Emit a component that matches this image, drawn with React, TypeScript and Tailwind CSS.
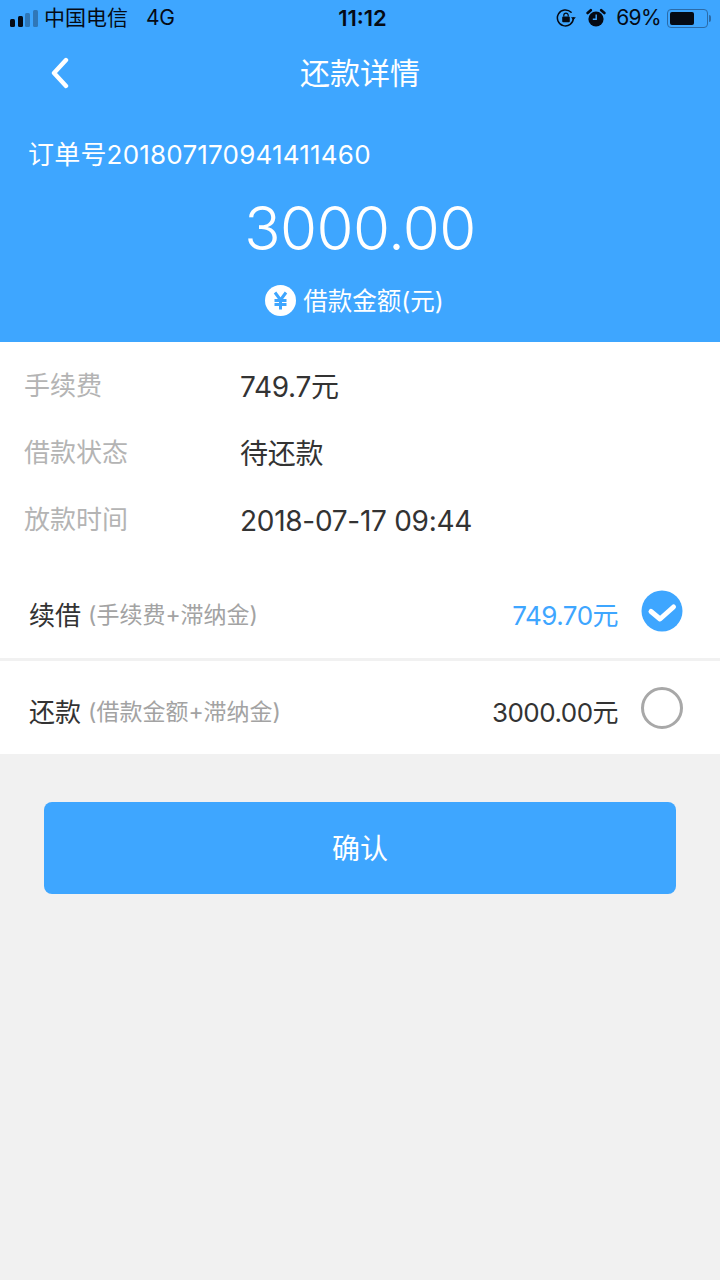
const page = "font-['Inter','Noto_Sans_CJK_SC',sans-serif]"

function StatusBar() {
   return (
      <div className="h-9 flex items-center justify-between pl-[10px] pr-[9px] text-[#050a14] text-[21px] relative">
         <div className="flex items-center">
            <div className="flex items-end gap-[2.5px] h-[18px] w-[29px] -mt-px">
               <span className="w-[5px] h-[8px] rounded-[1.5px] bg-[#050a14]" />
               <span className="w-[5px] h-[11px] rounded-[1.5px] bg-[#050a14]" />
               <span className="w-[5px] h-[14px] rounded-[1.5px] bg-[#2f77b8]" />
               <span className="w-[5px] h-[17px] rounded-[1.5px] bg-[#2f77b8]" />
            </div>
            <span className="ml-[5px]">中国电信</span>
            <span className="ml-[18px] tracking-[-0.02em]">4G</span>
         </div>
         <span className="absolute left-0 right-0 text-center font-semibold text-[22px] pl-[5px]">11:12</span>
         <div className="flex items-center">
            <svg width="20" height="20" viewBox="0 0 20 20" fill="none" className="mr-[10px]">
               <path d="M17.4 10a8 8 0 1 1-2.3-5.7" stroke="#050a14" strokeWidth="1.5" strokeLinecap="round" />
               <path d="M19.8 9.2h-4.8l2.4 3z" fill="#050a14" />
               <rect x="6.2" y="8.6" width="7.6" height="5.6" rx="1" fill="#050a14" />
               <path d="M7.8 8.6V7.3a2.2 2.2 0 0 1 4.4 0v1.3" stroke="#050a14" strokeWidth="1.2" />
            </svg>
            <svg width="20" height="20" viewBox="0 0 20 20" className="mr-[10px]">
               <circle cx="10" cy="11" r="7.6" fill="#050a14" />
               <path d="M1.6 5 4.8 2.2M18.4 5 15.2 2.2" stroke="#050a14" strokeWidth="2.6" strokeLinecap="round" />
               <path d="M10.2 6.4v4.8H6.8" stroke="#3ea6ff" strokeWidth="1.4" fill="none" />
            </svg>
            <span className="tracking-[-0.03em]">69%</span>
            <div className="ml-[6px] w-[41px] h-[19px] rounded-[4px] border border-[#2b6ba8] p-[2px]">
               <div className="w-[69%] h-full rounded-[2px] bg-[#050a14]" />
            </div>
            <span className="ml-[1px] w-[2px] h-[7px] rounded-r-sm bg-[#2b6ba8]" />
         </div>
      </div>
   )
}

function InfoRow({ label, value, className }: { label: string, value: string, className: string }) {
   return (
      <div className={`flex items-center pl-[24px] ${className}`}>
         <span className="w-[216px] text-[26px] text-[#b4b4b4] -mt-[3px]">{label}</span>
         <span className="text-[28px] text-[#333333] tracking-[-0.01em]">{value}</span>
      </div>
   )
}

function PayOption({ title, note, amount, checked }: { title: string, note: string, amount: string, checked: boolean }) {
   return (
      <div className="h-full flex items-center pl-[29px] pr-[37px]">
         <div className="flex items-center flex-1 pt-[10px]">
            <span className="text-[26px] text-[#333333]">{title}</span>
            <span className="ml-[7px] text-[23px] text-[#a3a3a3]">{note}</span>
            <span className={`ml-auto text-[26px] tracking-[-0.02em] ${checked ? 'text-[#3ea6ff]' : 'text-[#333333]'}`}>{amount}</span>
         </div>
         {checked ? (
            <svg width="42" height="42" viewBox="0 0 42 42" className="ml-[23px]">
               <circle cx="21" cy="21" r="20.5" fill="#3ea6ff" />
               <path d="M10 21.5 19 29 32.5 17" stroke="#ffffff" strokeWidth="5" strokeLinecap="round" strokeLinejoin="round" fill="none" />
            </svg>
         ) : (
            <div className="ml-[23px] w-[42px] h-[42px] rounded-full border-[3px] border-[#a8a8a8]" />
         )}
      </div>
   )
}

export default function App() {
   return (
      <div className={`w-[720px] h-[1280px] bg-[#f1f1f1] ${page}`}>
         <div className="h-[342px] bg-[#3ea6ff] text-white">
            <StatusBar />
            <div className="h-[74px] flex items-center justify-center relative">
               <svg width="20" height="32" viewBox="0 0 20 32" className="absolute left-[50px] top-[21px]">
                  <path d="M16 3 4 16l12 13" stroke="#ffffff" strokeWidth="4.4" strokeLinecap="round" strokeLinejoin="round" fill="none" />
               </svg>
               <span className="text-[30px] pt-[1px]">还款详情</span>
            </div>
            <div className="pl-[28px] mt-[26px] text-[26px] leading-[38px] tracking-[0.2px]">订单号201807170941411460</div>
            <div className="text-center text-[60px] leading-[70px] mt-[19px] font-[350] tracking-[-0.01em]">3000.00</div>
            <div className="flex items-center justify-center mt-[19px] pr-[11px]">
               <svg width="31" height="31" viewBox="0 0 31 31">
                  <circle cx="15.5" cy="15.5" r="15.5" fill="#ffffff" />
                  <path d="M10 7.5 15.5 15 21 7.5M9.5 15.5h12M9.5 19.5h12M15.5 15v9.5" stroke="#3ea6ff" strokeWidth="3" fill="none" />
               </svg>
               <span className="ml-[7px] text-[24.5px] leading-[34px] pt-[2px]">借款金额(元)</span>
            </div>
         </div>
         <div className="bg-white h-[412px] flex flex-col">
            <InfoRow label="手续费" value="749.7元" className="mt-[20px] h-[50px]" />
            <InfoRow label="借款状态" value="待还款" className="mt-[17px] h-[50px]" />
            <InfoRow label="放款时间" value="2018-07-17 09:44" className="mt-[17px] h-[50px]" />
            <div className="mt-[17px] h-[98px] border-b-[3px] border-[#f1f1f1]">
               <PayOption title="续借" note="(手续费+滞纳金)" amount="749.70元" checked />
            </div>
            <div className="flex-1">
               <PayOption title="还款" note="(借款金额+滞纳金)" amount="3000.00元" checked={false} />
            </div>
         </div>
         <button type="button" className="block ml-[44px] mt-[48px] w-[632px] h-[92px] rounded-lg bg-[#3ea6ff] text-white text-[28px] pt-[1px]">确认</button>
      </div>
   )
}
